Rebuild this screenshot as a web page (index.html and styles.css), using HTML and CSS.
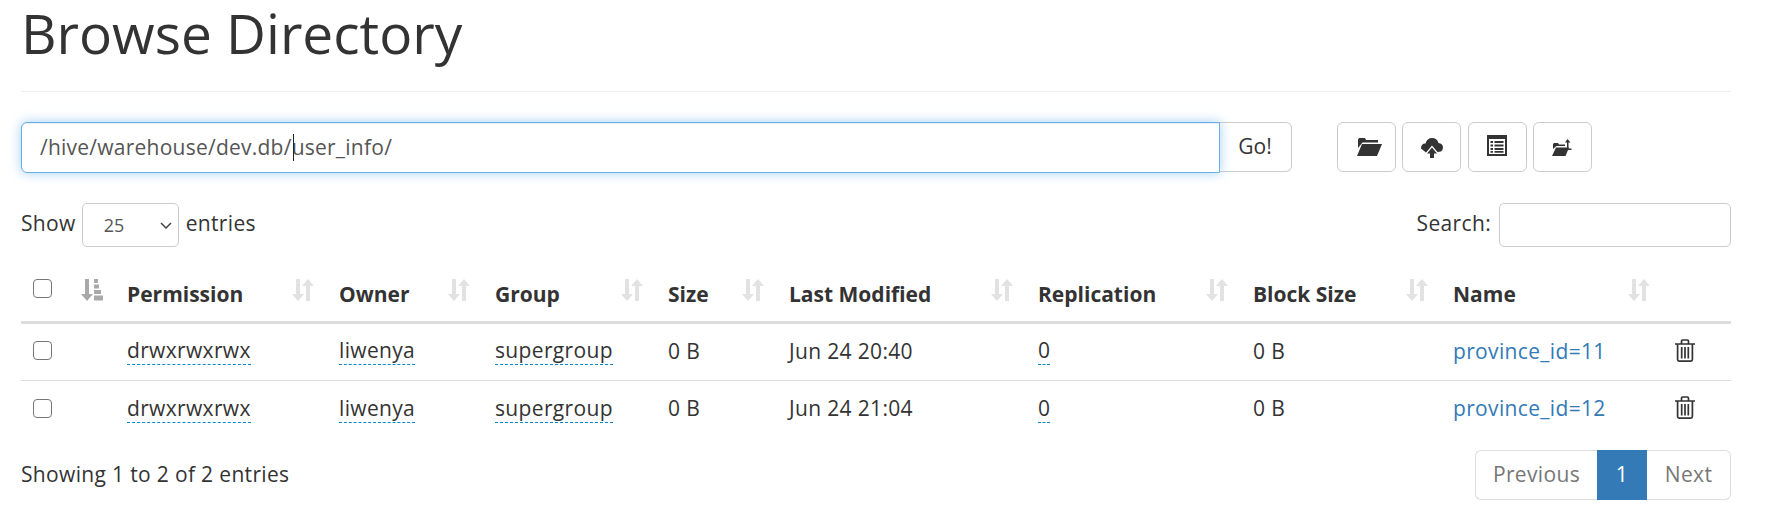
FILE: index.html
```html
<!DOCTYPE html>
<html lang="en">
<head>
<meta charset="utf-8">
<title>Browse Directory</title>
<link rel="stylesheet" href="styles.css">
</head>
<body>
<svg class="defs" width="0" height="0" aria-hidden="true">
  <symbol id="sort" viewBox="0 0 22 22">
    <path d="M4 0h4v15h4l-6 7-6-7h4z"/>
    <path d="M16 0l6 7h-4v15h-4V7h-4z"/>
  </symbol>
  <symbol id="sort-first" viewBox="0 0 22 22">
    <path d="M4 0h4v15h4l-6 7-6-7h4z"/>
    <path d="M13 0h4v4h-4zM13 5.500h5v4h-5zM13 11h7v4h-7zM13 16.500h9v5h-9z"/>
  </symbol>
  <symbol id="trash" viewBox="0 0 20 23">
    <path fill="none" stroke="currentColor" stroke-width="1.7" d="M0 5h20M6.500 5V2.200Q6.500 1 7.700 1h4.600q1.200 0 1.200 1.200V5M2.600 5v15.500q0 1.600 1.600 1.600h11.600q1.600 0 1.600-1.600V5M6.700 8v11.500M10 8v11.500M13.300 8v11.500"/>
  </symbol>
</svg>

<main class="page">
  <h1 class="title">Browse Directory</h1>

  <div class="toolbar">
    <div class="path-group">
      <div class="path-field">
        <input class="path-input" type="text" value="/hive/warehouse/dev.db/user_info/" aria-label="Path">
        <span class="caret"></span>
      </div>
      <button class="btn go" type="button">Go!</button>
    </div>
    <div class="tools">
      <button class="btn tool" type="button" aria-label="Open folder">
        <svg class="ic-open" viewBox="0 0 25 19"><path d="M1 11V2.500L2 1h6l1 2h12v2.500H5.500z"/><path d="M5 7h20l-5 12H0z"/></svg>
      </button>
      <button class="btn tool" type="button" aria-label="Upload">
        <svg class="ic-cloud" viewBox="0 0 22 21"><path d="M5 15.500L0 11.500Q0 6.500 4.500 6.500 6 1 11 1q5 0 6.500 5Q22 6.500 22 10.500q0 2.500-2 4L16.500 15 11 8.500 5.500 15z"/><path d="M11 10.500l5 6h-3V21H9v-4.500H6z"/></svg>
      </button>
      <button class="btn tool" type="button" aria-label="Table">
        <svg class="ic-list" viewBox="0 0 20 21"><path fill-rule="evenodd" d="M0 0h20v21H0zM2 4v15h16V4zM3.500 6h2.500v2H3.500zM7.500 6h9v2h-9zM3.500 9.500h2.500v2H3.500zM7.500 9.500h9v2h-9zM3.500 13h2.500v2H3.500zM7.500 13h9v2h-9zM3.500 16h2.500v1.700H3.500zM7.500 16h9v1.700h-9z"/></svg>
      </button>
      <button class="btn tool" type="button" aria-label="Move up">
        <svg class="ic-up" viewBox="0 0 21 17"><path d="M1 10V5l1-1h4l1 1.500h6V7H4.500z"/><path d="M4 8.500h13L13.500 17H0z"/><path d="M15.500 0l3 3.500h-2v6h3v1.500h-4.500V3.500h-2z"/></svg>
      </button>
    </div>
  </div>

  <div class="controls">
    <label class="length">Show
      <span class="select-wrap">
        <select class="length-select" aria-label="Entries"><option>25</option></select>
        <svg class="chev" viewBox="0 0 12 7"><path d="M1 1l5 5 5-5" fill="none" stroke="currentColor" stroke-width="1.500"/></svg>
      </span>
      entries</label>
    <label class="search">Search: <input class="search-input" type="search" aria-label="Search"></label>
  </div>

  <table class="files">
    <colgroup>
      <col class="c-check"><col class="c-perm"><col class="c-owner"><col class="c-group"><col class="c-size"><col class="c-mod"><col class="c-rep"><col class="c-block"><col class="c-name"><col class="c-del">
    </colgroup>
    <thead>
      <tr>
        <th><div class="th-in"><input class="check" type="checkbox" aria-label="Select all"><svg class="sort first"><use href="#sort-first"/></svg></div></th>
        <th><div class="th-in"><span>Permission</span><svg class="sort"><use href="#sort"/></svg></div></th>
        <th><div class="th-in"><span>Owner</span><svg class="sort"><use href="#sort"/></svg></div></th>
        <th><div class="th-in"><span>Group</span><svg class="sort"><use href="#sort"/></svg></div></th>
        <th><div class="th-in"><span>Size</span><svg class="sort"><use href="#sort"/></svg></div></th>
        <th><div class="th-in"><span>Last Modified</span><svg class="sort"><use href="#sort"/></svg></div></th>
        <th><div class="th-in"><span>Replication</span><svg class="sort"><use href="#sort"/></svg></div></th>
        <th><div class="th-in"><span>Block Size</span><svg class="sort"><use href="#sort"/></svg></div></th>
        <th><div class="th-in"><span>Name</span><svg class="sort"><use href="#sort"/></svg></div></th>
        <th></th>
      </tr>
    </thead>
    <tbody>
      <tr>
        <td><input class="check" type="checkbox" aria-label="Select row"></td>
        <td><span class="edit">drwxrwxrwx</span></td>
        <td><span class="edit">liwenya</span></td>
        <td><span class="edit">supergroup</span></td>
        <td>0 B</td>
        <td>Jun 24 20:40</td>
        <td><span class="edit">0</span></td>
        <td>0 B</td>
        <td><a class="link" href="#">province_id=11</a></td>
        <td><svg class="trash"><use href="#trash"/></svg></td>
      </tr>
      <tr>
        <td><input class="check" type="checkbox" aria-label="Select row"></td>
        <td><span class="edit">drwxrwxrwx</span></td>
        <td><span class="edit">liwenya</span></td>
        <td><span class="edit">supergroup</span></td>
        <td>0 B</td>
        <td>Jun 24 21:04</td>
        <td><span class="edit">0</span></td>
        <td>0 B</td>
        <td><a class="link" href="#">province_id=12</a></td>
        <td><svg class="trash"><use href="#trash"/></svg></td>
      </tr>
    </tbody>
  </table>

  <div class="foot">
    <div class="info">Showing 1 to 2 of 2 entries</div>
    <nav class="pager">
      <a class="pg prev" href="#">Previous</a>
      <a class="pg now" href="#">1</a>
      <a class="pg next" href="#">Next</a>
    </nav>
  </div>
</main>
</body>
</html>
```
FILE: styles.css
```css
* { box-sizing: border-box; }
html, body { margin: 0; padding: 0; background: #fff; }
body {
  font-family: "Open Sans", "Noto Sans", sans-serif;
  font-size: 21px;
  letter-spacing: .34px;
  color: #333;
  overflow: hidden;
}
.defs { position: absolute; }
.page { width: 1731px; height: 525px; padding-left: 21px; }

.title {
  margin: 0;
  height: 92px;
  border-bottom: 1px solid #eee;
  font-size: 55px;
  font-weight: 400;
  letter-spacing: 0;
  line-height: 66px;
}

.toolbar {
  display: flex;
  margin-top: 30px;
  height: 50px;
}
.path-group { display: flex; width: 1271px; }
.path-field { position: relative; width: 1199px; }
.path-input {
  display: block;
  width: 100%;
  height: 51px;
  padding: 0 18px 2px;
  border: 1px solid #66afe9;
  border-radius: 6px 0 0 6px;
  outline: 0;
  box-shadow: inset 0 1px 1px rgba(0,0,0,.075), 0 0 12px rgba(102,175,233,.6);
  font: inherit;
  letter-spacing: .24px;
  color: #555;
}
.caret {
  position: absolute;
  left: 272px;
  top: 12px;
  width: 1px;
  height: 27px;
  background: #222;
}
.btn {
  display: flex;
  align-items: center;
  justify-content: center;
  padding: 0 0 3px;
  height: 50px;
  background: #fff;
  border: 1px solid #ccc;
  border-radius: 6px;
  font: inherit;
  color: #333;
}
.go {
  width: 73px;
  margin-left: -1px;
  border-left: 0;
  border-radius: 0 6px 6px 0;
}
.tools { display: flex; margin-left: 45px; }
.tool { width: 59px; margin-right: 6.3px; padding: 0; }
.tool svg { fill: #333; display: block; }
.ic-open { width: 25px; height: 19px; margin: -1px 0 0 5px; }
.ic-cloud { width: 22px; height: 21px; margin-left: 1px; }
.ic-list { width: 20px; height: 21px; margin-top: -3px; }
.ic-up { width: 21px; height: 17px; }

.controls {
  display: flex;
  justify-content: space-between;
  align-items: center;
  margin-top: 31px;
  height: 44px;
  line-height: 40px;
}
.length, .search { display: flex; align-items: flex-start; height: 44px; }
.select-wrap { position: relative; display: block; width: 97px; height: 44px; margin: 0 7px 0 6px; }
.length-select {
  appearance: none;
  width: 100%;
  height: 100%;
  padding: 0 0 0 21px;
  background: #fff;
  border: 1px solid #ccc;
  border-radius: 5px;
  font: inherit;
  font-size: 18px;
  color: #555;
}
.chev {
  position: absolute;
  right: 7px;
  top: 19px;
  width: 12px;
  height: 7px;
  color: #444;
  pointer-events: none;
}
.search-input {
  width: 232px;
  height: 44px;
  margin-left: 8px;
  border: 1px solid #ccc;
  border-radius: 5px;
  background: #fff;
}

.files {
  table-layout: fixed;
  border-collapse: separate;
  border-spacing: 0;
  width: 1710px;
}
.c-check { width: 94px; }
.c-perm { width: 212px; }
.c-owner { width: 156px; }
.c-group { width: 173px; }
.c-size { width: 121px; }
.c-mod { width: 249px; }
.c-rep { width: 215px; }
.c-block { width: 200px; }
.c-name { width: 222px; }
.c-del { width: 68px; }

.files th {
  height: 77px;
  padding: 0 12px 13px;
  border-bottom: 3px solid #ddd;
  vertical-align: bottom;
  text-align: left;
  font-weight: 700;
  letter-spacing: 0;
}
.th-in { display: flex; justify-content: space-between; align-items: flex-start; height: 29px; line-height: 29px; }
.th-in span { display: block; padding-top: 1px; }
.sort { width: 22px; height: 22px; fill: #e2e2e2; margin-right: 1px; }
.sort.first { fill: #a9a9a9; margin-right: 0; }
.check {
  appearance: none;
  display: block;
  width: 19px;
  height: 19px;
  margin: 0;
  background: #fff;
  border: 1.5px solid #767676;
  border-radius: 4px;
}
.files td {
  height: 57px;
  padding: 0 12px 3px;
  border-bottom: 1px solid #ddd;
  vertical-align: middle;
  line-height: 28px;
}
.files tbody tr:last-child td { border-bottom: 0; }
.edit { border-bottom: 1px dashed #08c; display: inline-block; line-height: 27px; }
.link { color: #337ab7; text-decoration: none; }
.trash { display: block; width: 20px; height: 23px; color: #333; margin-top: -1px; }

.foot {
  display: flex;
  justify-content: space-between;
  align-items: center;
  margin-top: 12px;
}
.info { padding-bottom: 2px; }
.pager { display: flex; height: 50px; }
.pg {
  display: flex;
  align-items: center;
  justify-content: center;
  padding-bottom: 2px;
  border: 1px solid #ddd;
  color: #777;
  text-decoration: none;
  background: #fff;
}
.prev { width: 122px; border-radius: 6px 0 0 6px; border-right: 0; }
.now { width: 50px; background: #337ab7; border-color: #337ab7; color: #fff; }
.next { width: 84px; border-radius: 0 6px 6px 0; border-left: 0; }
```
